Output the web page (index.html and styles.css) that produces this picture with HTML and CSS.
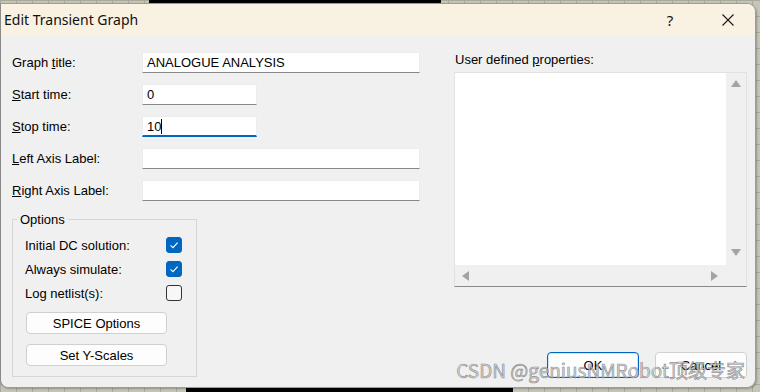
FILE: index.html
```html
<!DOCTYPE html>
<html>
<head>
<meta charset="utf-8">
<link rel="stylesheet" href="styles.css">
</head>
<body>
<div class="desk-black top"></div>
<div class="desk-black bottom"></div>
<div class="dialog">
  <div class="titlebar">
    <span class="title">Edit Transient Graph</span>
    <span class="help">?</span>
    <span class="close"><svg width="12" height="12" viewBox="0 0 12 12"><path d="M0.5 0.5 L11.5 11.5 M11.5 0.5 L0.5 11.5" stroke="#1a1a1a" stroke-width="1.1" fill="none"/></svg></span>
  </div>
  <div class="body">
    <div class="left">
      <div class="row"><span class="lbl">Graph <u>t</u>itle:</span><div class="input wide">ANALOGUE ANALYSIS</div></div>
      <div class="row"><span class="lbl"><u>S</u>tart time:</span><div class="input narrow">0</div></div>
      <div class="row"><span class="lbl"><u>S</u>top time:</span><div class="input narrow focus">10<span class="caret"></span></div></div>
      <div class="row"><span class="lbl"><u>L</u>eft Axis Label:</span><div class="input wide"></div></div>
      <div class="row"><span class="lbl"><u>R</u>ight Axis Label:</span><div class="input wide"></div></div>
      <fieldset class="options">
        <legend>Options</legend>
        <div class="opts">
          <div class="chk-row"><span>Initial DC solution:</span><span class="chk on"><svg width="16" height="16" viewBox="0 0 16 16"><path d="M4.5 8.3 L7 10.6 L11.6 5.6" stroke="#fff" stroke-width="1.1" fill="none"/></svg></span></div>
          <div class="chk-row"><span>Always simulate:</span><span class="chk on"><svg width="16" height="16" viewBox="0 0 16 16"><path d="M4.5 8.3 L7 10.6 L11.6 5.6" stroke="#fff" stroke-width="1.1" fill="none"/></svg></span></div>
          <div class="chk-row"><span>Log netlist(s):</span><span class="chk"></span></div>
          <div class="btn opt-btn first">SPICE Options</div>
          <div class="btn opt-btn">Set Y-Scales</div>
        </div>
      </fieldset>
    </div>
    <div class="right">
      <div class="udp">User defined <u>p</u>roperties:</div>
      <div class="listbox">
        <div class="lb-area"></div>
        <div class="vscroll">
          <svg width="10" height="7" viewBox="0 0 10 7"><path d="M5 0 L10 7 L0 7 Z" fill="#a3a3a3"/></svg>
          <svg width="10" height="7" viewBox="0 0 10 7"><path d="M0 0 L10 0 L5 7 Z" fill="#a3a3a3"/></svg>
        </div>
        <div class="hscroll">
          <svg width="7" height="10" viewBox="0 0 7 10"><path d="M7 0 L7 10 L0 5 Z" fill="#a3a3a3"/></svg>
          <svg width="7" height="10" viewBox="0 0 7 10"><path d="M0 0 L7 5 L0 10 Z" fill="#a3a3a3"/></svg>
        </div>
        <div class="corner"></div>
      </div>
      <div class="actions">
        <div class="btn act default">OK</div>
        <div class="btn act">Cancel</div>
      </div>
    </div>
  </div>
  <div class="watermark">CSDN @geniusNMRobot顶级专家</div>
</div>
</body>
</html>
```
FILE: styles.css
```css
* { box-sizing: border-box; }
html, body { margin: 0; padding: 0; }
body {
  width: 760px;
  height: 392px;
  overflow: hidden;
  position: relative;
  background-color: #c6c6b8;
  background-image:
    repeating-linear-gradient(to right, #a9a99c 0 1px, transparent 1px 16px),
    repeating-linear-gradient(to bottom, #a9a99c 0 1px, transparent 1px 16px);
  padding: 3px 4px 4px 0;
  font-family: "Liberation Sans", Arial, sans-serif;
  font-size: 13px;
  color: #000;
}
.desk-black { position: absolute; background: #000; }
.desk-black.top { left: 149px; top: 0; width: 292px; height: 4px; }
.desk-black.bottom { left: 186px; top: 387px; width: 327px; height: 5px; }

.dialog {
  position: relative;
  width: 756px;
  height: 385px;
  background: #f0f0f0;
  border: 1px solid #9c9c9c;
  border-left-color: #8a8a8a;
  border-radius: 0 9px 9px 8px;
  overflow: hidden;
  display: flex;
  flex-direction: column;
  box-shadow: 1px 1px 2px rgba(0,0,0,0.25);
}
.titlebar {
  height: 31px;
  flex: none;
  background: #f9f2e2;
  display: flex;
  align-items: center;
  padding-left: 3px;
  font-family: "Noto Sans", "Open Sans", sans-serif;
  font-size: 14px;
  color: #111;
}
.title { flex: 1; }
.help { width: 10px; text-align: center; margin-right: 47px; font-size: 15px; }
.close { width: 12px; height: 12px; display: flex; margin-right: 21px; }

.body { flex: 1; display: flex; }
.left { width: 420px; padding: 17px 0 0 11px; flex: none; }
.row { display: flex; align-items: center; height: 21px; margin-bottom: 11px; }
.lbl { width: 130px; flex: none; }
.input {
  height: 21px;
  background: #fff;
  border: 1px solid #ececec;
  border-bottom: 1px solid #888;
  padding: 0 4px;
  display: flex;
  align-items: center;
  line-height: 1;
}
.input.wide { width: 278px; }
.input.narrow { width: 115px; }
.input.focus { border-bottom: 2px solid #0067c0; padding-top: 1px; }
.caret { display: inline-block; width: 1px; height: 15px; background: #000; margin-left: 0; }

.options {
  margin: 1px 0 0 0;
  width: 185px;
  padding: 0;
  border: 1px solid #d6d6d6;
  min-width: 0;
}
.options legend {
  margin-left: 4px;
  padding: 0 3px;
  line-height: 15px;
}
.opts { padding: 6px 0 10px 12px; }
.chk-row { height: 24px; display: flex; align-items: center; justify-content: space-between; width: 157px; }
.chk {
  width: 16px; height: 16px;
  border: 1px solid #333;
  border-radius: 3px;
  display: flex;
  background: #f7f7f7;
}
.chk.on { background: #0067c0; border-color: #0067c0; }
.chk svg { margin: -1px; }

.btn {
  background: #fdfdfd;
  border: 1px solid #d0d0d0;
  border-radius: 4px;
  display: flex;
  align-items: center;
  justify-content: center;
}
.opt-btn { width: 141px; height: 22px; margin-left: 1px; margin-top: 10px; }
.opt-btn.first { margin-top: 7px; }

.right { margin-left: 33px; width: 293px; padding-top: 17px; }
.udp { line-height: 15px; padding-left: 1px; }
.listbox {
  margin-top: 5px;
  height: 215px;
  border: 1px solid #e2e2e2;
  border-bottom: 1px solid #888;
  display: grid;
  grid-template-columns: 1fr 20px;
  grid-template-rows: 1fr 21px;
}
.lb-area { background: #fff; }
.vscroll { background: #f0f0f0; display: flex; flex-direction: column; justify-content: space-between; align-items: center; padding: 7px 0 9px; }
.hscroll { background: #f0f0f0; display: flex; justify-content: space-between; align-items: center; padding: 0 8px 0 7px; }
.corner { background: #f0f0f0; }

.actions { display: flex; justify-content: flex-end; gap: 16px; margin-top: 65px; }
.act { width: 92px; height: 26px; }
.act.default { border: 1px solid #0067c0; box-shadow: inset 0 0 0 1px #cfe3f6; }

.watermark {
  position: absolute;
  right: 10px;
  bottom: 4px;
  font-family: "Noto Sans CJK SC", "Noto Sans", sans-serif;
  font-size: 19px;
  color: rgba(205,205,205,0.85);
  -webkit-text-stroke: 0.6px rgba(110,110,110,0.75);
  letter-spacing: 0;
  white-space: nowrap;
}
```
